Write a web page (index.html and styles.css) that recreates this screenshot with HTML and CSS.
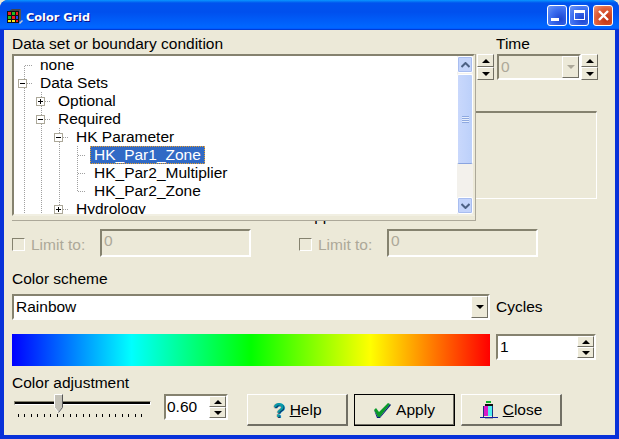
FILE: index.html
```html
<!DOCTYPE html>
<html><head>
<title>Color Grid</title>
<meta charset="utf-8">
<link rel="stylesheet" href="styles.css">
</head><body>
<div class="window">
  <div class="titlebar">
    <svg class="app-icon" width="18" height="16" viewBox="0 0 18 16">
      <path d="M3 2l3-2h9l-2 2z" fill="#444"/>
      <path d="M13 2l2-2v10l-2 3z" fill="#555"/>
      <rect x="1" y="2" width="12" height="12" fill="#111"/>
      <rect x="2" y="3" width="3" height="3" fill="#f02020"/><rect x="6" y="3" width="3" height="3" fill="#20c020"/><rect x="10" y="3" width="2" height="3" fill="#f02020"/>
      <rect x="2" y="7" width="3" height="3" fill="#20c020"/><rect x="6" y="7" width="3" height="3" fill="#f02020"/><rect x="10" y="7" width="2" height="3" fill="#2040f0"/>
      <rect x="2" y="11" width="3" height="2" fill="#f8e820"/><rect x="6" y="11" width="3" height="2" fill="#f8e820"/><rect x="10" y="11" width="2" height="2" fill="#f02020"/>
      <path d="M13 14l3-3 1 1-3 3z" fill="#ccc"/>
    </svg>
    <span class="title">Color Grid</span>
    <div class="caption-btns">
      <div class="cap-btn"><span class="min-glyph"></span></div>
      <div class="cap-btn"><span class="max-glyph"></span></div>
      <div class="cap-btn cap-close">
        <svg width="13" height="13" viewBox="0 0 13 13"><path d="M2 2l9 9M11 2l-9 9" stroke="#fff" stroke-width="2.4"/></svg>
      </div>
    </div>
  </div>

  <div class="client">
    <div class="label-row">
      <span class="data-label">Data set or boundary condition</span>
      <span>Time</span>
    </div>
    <div class="top-row">
      <div class="tree-slot"></div>
      <div class="spin-pair"><div class="spin-btn"><i class="up"></i></div><div class="spin-btn"><i class="down"></i></div></div>
      <div class="time-combo sunken">
        <span class="disabled-text">0</span>
        <div class="combo-btn off"><i class="down grey"></i></div>
      </div>
      <div class="spin-pair"><div class="spin-btn"><i class="up"></i></div><div class="spin-btn"><i class="down"></i></div></div>
    </div>

    <div class="groupbox"></div>

    <div class="limit-labels">
      <span class="limit-cap">Upper limit</span>
    </div>
    <div class="limit-row">
      <div class="limit">
        <span class="check"></span><span class="disabled-text limit-text">Limit to:</span>
        <div class="limit-input sunken"><span class="disabled-text">0</span></div>
      </div>
      <div class="limit">
        <span class="check"></span><span class="disabled-text limit-text">Limit to:</span>
        <div class="limit-input sunken"><span class="disabled-text">0</span></div>
      </div>
    </div>

    <div class="scheme-label">Color scheme</div>
    <div class="scheme-grid">
      <div class="scheme-combo sunken white">
        <span>Rainbow</span>
        <div class="combo-btn"><i class="down"></i></div>
      </div>
      <span class="cycles">Cycles</span>
      <div class="gradient"></div>
      <div class="cycles-edit sunken white">
        <span>1</span>
        <div class="spin-pair small"><div class="spin-btn"><i class="up"></i></div><div class="spin-btn"><i class="down"></i></div></div>
      </div>
    </div>

    <div class="adjust-label">Color adjustment</div>
    <div class="bottom-row">
      <div class="slider">
        <div class="track"></div>
        <svg class="thumb" width="9" height="19" viewBox="0 0 9 19"><path d="M.5.5h8v13l-4 5-4-5z" fill="#c4c2b8" stroke="#fff"/><path d="M8.5.5v13l-4 5" fill="none" stroke="#555"/></svg>
        <div class="ticks"></div>
      </div>
      <div class="adjust-edit sunken white">
        <span>0.60</span>
        <div class="spin-pair small"><div class="spin-btn"><i class="up"></i></div><div class="spin-btn"><i class="down"></i></div></div>
      </div>
      <div class="buttons">
        <div class="btn"><span class="help-mark">?</span><span><u>H</u>elp</span></div>
        <div class="btn btn-default">
          <svg width="18" height="16" viewBox="0 0 18 16"><path d="M1 8l2-2 3 4 9-9 2 1L7 15h-2z" fill="#0a9a2a"/><path d="M1 8l4 7h2L17 2l1 1L7 16H4z" fill="#04227a"/></svg>
          <span>Apply</span>
        </div>
        <div class="btn">
          <svg width="18" height="18" viewBox="0 0 18 18"><rect x="6" y="0" width="5" height="2" fill="#10b030"/><rect x="5" y="3" width="8" height="2" fill="#111"/><rect x="3" y="5" width="5" height="10" fill="#d818c8"/><rect x="8" y="5" width="4" height="10" fill="#50f0f0"/><rect x="3" y="5" width="1" height="11" fill="#203080"/><rect x="12" y="5" width="1" height="11" fill="#203080"/><rect x="0" y="16" width="18" height="1" fill="#1020a0"/><rect x="5" y="17" width="8" height="1" fill="#aaa"/></svg>
          <span><u>C</u>lose</span>
        </div>
      </div>
    </div>

    <!-- dropped down tree sits over the group box and the limit labels -->
    <div class="tree-popup">
      <div class="tree-view">
        <div class="tree">
          <svg class="tree-lines" width="443" height="158" viewBox="14 56 443 158">
            <g stroke="#a0a0a0" stroke-dasharray="1 1" fill="none">
              <path d="M24.5 66V214M25 65.500h7M27 83.500h5"/>
              <path d="M41.500 92V214M45 101.500h5M45 119.500h5"/>
              <path d="M59.500 128V214M63 137.500h5M63 209.500h5"/>
              <path d="M77.500 146V191M78 155.500h8M78 173.500h8M78 191.500h8"/>
            </g>
            <g fill="#fff" stroke="#aca899">
              <rect x="18.500" y="79.500" width="8" height="8"/>
              <rect x="36.500" y="97.500" width="8" height="8"/>
              <rect x="36.500" y="115.500" width="8" height="8"/>
              <rect x="54.500" y="133.500" width="8" height="8"/>
              <rect x="54.500" y="205.500" width="8" height="8"/>
            </g>
            <path d="M20 83.500h5M38 101.500h5M40.500 99v5M38 119.500h5M56 137.500h5M56 209.500h5M58.500 207v5" stroke="#000" fill="none"/>
          </svg>
          <div class="node lvl0">none</div>
          <div class="node lvl0">Data Sets</div>
          <div class="node lvl1">Optional</div>
          <div class="node lvl1">Required</div>
          <div class="node lvl2">HK Parameter</div>
          <div class="node lvl3"><span class="selected">HK_Par1_Zone</span></div>
          <div class="node lvl3">HK_Par2_Multiplier</div>
          <div class="node lvl3">HK_Par2_Zone</div>
          <div class="node lvl2">Hydrology</div>
        </div>
        <div class="scrollbar">
          <div class="sb-btn"><svg width="9" height="6" viewBox="0 0 9 6"><path d="M.5 5l4-4 4 4" fill="none" stroke="#4d6185" stroke-width="2"/></svg></div>
          <div class="sb-thumb"><span class="grip"></span></div>
          <div class="sb-btn"><svg width="9" height="6" viewBox="0 0 9 6"><path d="M.5 1l4 4 4-4" fill="none" stroke="#4d6185" stroke-width="2"/></svg></div>
        </div>
      </div>
    </div>
  </div>
</div>
</body></html>
```

FILE: styles.css
```css
html, body { margin: 0; padding: 0; }
body { width: 619px; height: 439px; overflow: hidden; background: #ece9d8; font-family: "Liberation Sans", Arial, sans-serif; font-size: 15.500px; color: #000; }
.window { width: 619px; height: 439px; display: flex; flex-direction: column; box-sizing: border-box; border-radius: 8px 8px 0 0; background: #0831d9; overflow: hidden; }

.titlebar { height: 30px; flex: none; display: flex; align-items: center; box-sizing: border-box; padding: 3px 6px 0 6px; background: linear-gradient(180deg, #0997ff 0, #0053ee 10%, #0050ee 40%, #0066ff 88%, #0066ff 93%, #005bff 95%, #003dd7 96%, #003dd7 100%); }
.app-icon { flex: none; margin-right: 2px; }
.title { color: #fff; font-family: "DejaVu Sans", sans-serif; font-weight: bold; font-size: 11.300px; margin-top: 1px; text-shadow: 1px 1px 0 #0f1089; }
.caption-btns { margin-left: auto; display: flex; gap: 2px; margin-top: -3px; }
.cap-btn { width: 18px; height: 19px; border: 1px solid #fff; border-radius: 3px; display: flex; align-items: center; justify-content: center; background: radial-gradient(circle at 70% 70%, #1c44d0 0, #3c6ef0 55%, #6f98f6 100%); position: relative; }
.cap-close { background: radial-gradient(circle at 70% 70%, #c03010 0, #e0603a 60%, #f09a80 100%); margin-left: 2px; }
.min-glyph { width: 8px; height: 3px; background: #fff; margin: 9px 5px 0 0; }
.max-glyph { width: 11px; height: 10px; box-sizing: border-box; border: 1px solid #fff; border-top-width: 3px; }

.client { position: relative; flex: 1; margin: 0 4px 4px 4px; padding: 6px 0 0 8px; background: #ece9d8; }

.label-row { display: flex; height: 18px; line-height: 15px; }
.data-label { width: 484px; }
.top-row { display: flex; height: 26px; }
.tree-slot { width: 465px; }
.spin-pair { width: 17px; height: 26px; flex: none; display: flex; flex-direction: column; }
.spin-btn { flex: 1; box-sizing: border-box; display: flex; align-items: center; justify-content: center; background: #ece9d8; border: 1px solid; border-color: #fff #716f64 #716f64 #fff; }
.up, .down { display: block; width: 0; height: 0; border-left: 4px solid transparent; border-right: 4px solid transparent; }
.up { border-bottom: 4px solid #000; }
.down { border-top: 4px solid #000; }
.down.grey { border-top-color: #aca899; }

.sunken { box-sizing: border-box; border: 2px solid; border-color: #85826f #fff #fff #85826f; display: flex; align-items: center; }
.white { background: #fff; }
.disabled-text { color: #aca899; }
.time-combo { width: 84px; height: 26px; margin-left: 3px; padding-left: 2px; justify-content: space-between; }
.combo-btn { width: 17px; height: 22px; box-sizing: border-box; display: flex; align-items: center; justify-content: center; background: #ece9d8; border: 1px solid; border-color: #fff #716f64 #716f64 #fff; }

.groupbox { width: 585px; height: 88px; margin-top: 31px; box-sizing: border-box; border: 1px solid #fff; border-top: 2px solid #85826f; }

.limit-labels { display: flex; height: 18px; margin-top: 9px; padding-left: 291px; line-height: 15px; }
.limit-row { display: flex; margin-top: 3px; height: 28px; }
.limit { display: flex; align-items: center; width: 287px; }
.check { width: 13px; height: 13px; flex: none; box-sizing: border-box; border: 1px solid; border-color: #85826f #fff #fff #85826f; margin-top: 3px; }
.limit-text { width: 69px; margin-left: 6px; margin-top: 3px; }
.limit-input { width: 151px; height: 28px; padding: 0 0 5px 2px; }

.scheme-label { margin-top: 13px; height: 24px; line-height: 17px; }
.scheme-grid { display: grid; grid-template-columns: 478px 100px; column-gap: 6px; row-gap: 14px; grid-template-rows: 26px 32px; }
.scheme-combo { padding-left: 2px; padding-right: 0; justify-content: space-between; height: 26px; }
.cycles { align-self: center; }
.gradient { background: linear-gradient(90deg, #0000ff 0, #00ffff 25%, #00ff00 50%, #ffff00 75%, #ff0000 100%); }
.cycles-edit { height: 26px; padding-left: 2px; justify-content: space-between; }
.spin-pair.small { width: 17px; height: 22px; }

.adjust-label { height: 20px; margin-top: 8px; line-height: 17px; }
.bottom-row { display: flex; height: 32px; }
.slider { position: relative; width: 152px; height: 26px; }
.track { position: absolute; left: 2px; right: 13px; top: 7px; height: 2px; background: #000; border: 1px solid; border-color: #85826f #fff #fff #85826f; }
.thumb { position: absolute; left: 42px; top: 0; }
.ticks { position: absolute; left: 6px; width: 130px; top: 20px; height: 3px; background: repeating-linear-gradient(90deg, #000 0, #000 1px, transparent 1px, transparent 6.500px); }
.adjust-edit { width: 64px; height: 26px; padding-left: 1px; justify-content: space-between; }
.buttons { display: flex; gap: 6px; margin-left: 19px; }
.btn { width: 101px; height: 32px; box-sizing: border-box; display: flex; align-items: center; justify-content: center; gap: 5px; padding-top: 1px; background: #ece9d8; border: 1px solid; border-color: #fff #716f64 #716f64 #fff; border-width: 1px 2px 2px 1px; }
.btn-default { outline: 1px solid #000; outline-offset: -1px; }
.help-mark { font-weight: bold; font-size: 20px; color: #0a9aa8; text-shadow: 1px 1px 0 #053a70; }

.tree-popup { position: absolute; left: 8px; top: 24px; width: 464px; height: 167px; box-sizing: border-box; background: #ece9d8; border-right: 1px solid #aca899; border-bottom: 1px solid #aca899; }
.tree-view { box-sizing: border-box; height: 162px; display: flex; background: #fff; border: 2px solid; border-color: #85826f #ece9d8 #f1efe2 #85826f; }
.tree { position: relative; flex: 1; height: 158px; overflow: hidden; }
.tree-lines { position: absolute; left: 0; top: 0; }
.node { height: 18px; line-height: 18px; white-space: nowrap; position: relative; }
.lvl0 { padding-left: 26px; }
.lvl1 { padding-left: 44px; }
.lvl2 { padding-left: 62px; }
.lvl3 { padding-left: 80px; }
.selected { display: inline-block; height: 18px; margin-left: -4px; padding: 0 3px; box-sizing: border-box; line-height: 16px; background: #316ac5; color: #fff; border: 1px dotted #e8a030; }
.scrollbar { width: 16px; flex: none; display: flex; flex-direction: column; background: #f3f1ec; }
.sb-btn { height: 17px; flex: none; box-sizing: border-box; display: flex; align-items: center; justify-content: center; background: #c4d4fb; border: 1px solid #fff; border-radius: 2px; box-shadow: inset 0 0 0 1px #a8bdf0; }
.sb-thumb { height: 90px; margin: 1px 0; box-sizing: border-box; display: flex; align-items: center; justify-content: center; background: linear-gradient(90deg, #c9d8fc, #bcd0fa); border: 1px solid #fff; border-bottom-color: #8aa4e0; border-radius: 2px; }
.grip { width: 7px; height: 7px; background: repeating-linear-gradient(180deg, #8ea8e0 0, #8ea8e0 1px, #e6eefc 1px, #e6eefc 2px); }
.sb-thumb + .sb-btn { margin-top: auto; }
```
